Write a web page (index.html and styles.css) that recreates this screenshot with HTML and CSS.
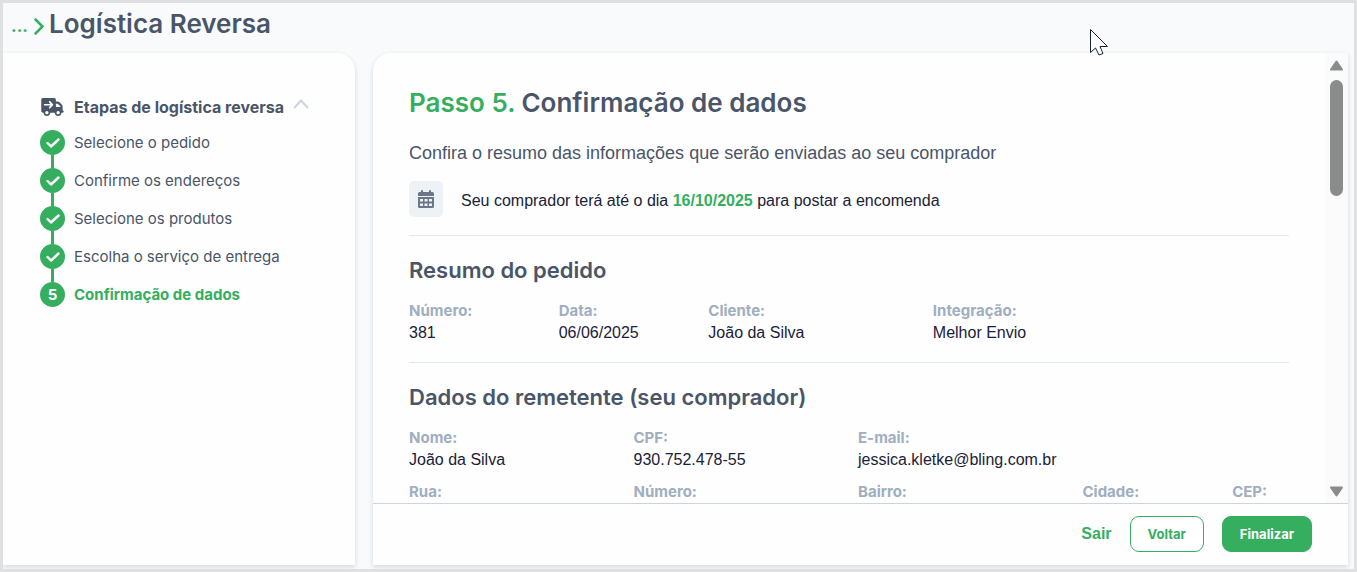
FILE: index.html
```html
<!DOCTYPE html>
<html lang="pt-BR">
<head>
    <meta charset="UTF-8">
    <meta name="viewport" content="width=device-width, initial-scale=1.0">
    <title>Logística Reversa</title>
    <link rel="stylesheet" href="styles.css">
</head>
<body>
    <header class="topbar">
        <a href="#" class="back">...</a>
        <svg class="chevron" viewBox="0 0 10 17"><path d="M1.5 1.5 8.5 8.5 1.5 15.5"/></svg>
        <h1>Logística Reversa</h1>
    </header>

    <div class="layout">
        <aside class="sidebar">
            <button class="steps-toggle" type="button">
                <svg class="truck" viewBox="0 0 640 512"><path d="M0 48C0 21.500 21.500 0 48 0H368c26.500 0 48 21.500 48 48V96h50.700c17 0 33.300 6.700 45.300 18.700L589.300 192c12 12 18.700 28.300 18.700 45.300V256v32 64c17.700 0 32 14.300 32 32s-14.300 32-32 32H576c0 53-43 96-96 96s-96-43-96-96H256c0 53-43 96-96 96s-96-43-96-96H48c-26.500 0-48-21.500-48-48V48zM416 256H544V237.300L466.700 160H416v96zM160 464a48 48 0 1 0 0-96 48 48 0 1 0 0 96zm368-48a48 48 0 1 0-96 0 48 48 0 1 0 96 0zM257 95c-9.400-9.400-24.600-9.400-33.900 0s-9.400 24.600 0 33.900l39 39L96 168c-13.300 0-24 10.700-24 24s10.700 24 24 24l166.100 0-39 39c-9.400 9.400-9.400 24.600 0 33.900s24.600 9.400 33.900 0l80-80c9.400-9.400 9.400-24.600 0-33.900L257 95z"/></svg>
                <span>Etapas de logística reversa</span>
                <svg class="caret" viewBox="0 0 16 10"><path d="M1.500 8.500 8 1.500 14.500 8.500"/></svg>
            </button>
            <ol class="steps">
                <li>
                    <span class="dot"><svg viewBox="0 0 14 10"><path d="M1.500 5 5 8.500 12.500 1.500"/></svg></span>
                    Selecione o pedido
                </li>
                <li>
                    <span class="dot"><svg viewBox="0 0 14 10"><path d="M1.500 5 5 8.500 12.500 1.500"/></svg></span>
                    Confirme os endereços
                </li>
                <li>
                    <span class="dot"><svg viewBox="0 0 14 10"><path d="M1.500 5 5 8.500 12.500 1.500"/></svg></span>
                    Selecione os produtos
                </li>
                <li>
                    <span class="dot"><svg viewBox="0 0 14 10"><path d="M1.500 5 5 8.500 12.500 1.500"/></svg></span>
                    Escolha o serviço de entrega
                </li>
                <li class="active">
                    <span class="dot">5</span>
                    Confirmação de dados
                </li>
            </ol>
        </aside>

        <main class="panel">
            <div class="panel-body">
                <div class="content">
                    <h2><span class="green">Passo 5.</span> Confirmação de dados</h2>
                    <p class="intro">Confira o resumo das informações que serão enviadas ao seu comprador</p>
                    <div class="deadline">
                        <span class="calendar">
                            <svg viewBox="0 0 16 18"><path fill-rule="evenodd" d="M4 0a1 1 0 0 1 1 1v1h6V1a1 1 0 0 1 2 0v1h1.500A1.500 1.500 0 0 1 16 3.500V6H0V3.500A1.500 1.500 0 0 1 1.500 2H3V1a1 1 0 0 1 1-1zM0 7h16v9.500a1.500 1.500 0 0 1-1.500 1.500h-13A1.500 1.500 0 0 1 0 16.500zM2 9v2.500h3V9zm4.500 0v2.500h3V9zM11 9v2.500h3V9zM2 13.500V16h3v-2.500zm4.500 0V16h3v-2.500zm4.500 0V16h3v-2.500z"/></svg>
                        </span>
                        <p>Seu comprador terá até o dia <strong class="green">16/10/2025</strong> para postar a encomenda</p>
                    </div>

                    <section>
                        <h3>Resumo do pedido</h3>
                        <dl class="grid">
                            <div class="col-2"><dt>Número:</dt><dd>381</dd></div>
                            <div class="col-2"><dt>Data:</dt><dd>06/06/2025</dd></div>
                            <div class="col-3"><dt>Cliente:</dt><dd>João da Silva</dd></div>
                            <div class="col-5"><dt>Integração:</dt><dd>Melhor Envio</dd></div>
                        </dl>
                    </section>

                    <section>
                        <h3>Dados do remetente (seu comprador)</h3>
                        <dl class="grid">
                            <div class="col-3"><dt>Nome:</dt><dd>João da Silva</dd></div>
                            <div class="col-3"><dt>CPF:</dt><dd>930.752.478-55</dd></div>
                            <div class="col-6"><dt>E-mail:</dt><dd>jessica.kletke@bling.com.br</dd></div>
                            <div class="col-3"><dt>Rua:</dt></div>
                            <div class="col-3"><dt>Número:</dt></div>
                            <div class="col-3"><dt>Bairro:</dt></div>
                            <div class="col-2"><dt>Cidade:</dt></div>
                            <div class="col-1"><dt>CEP:</dt></div>
                        </dl>
                    </section>
                </div>
                <div class="scrollbar">
                    <svg viewBox="0 0 15 11"><path d="M7.500 1.500 13 9.500H2z"/></svg>
                    <div class="track"><div class="thumb"></div></div>
                    <svg viewBox="0 0 15 11"><path d="M7.500 9.500 13 1.500H2z"/></svg>
                </div>
            </div>
            <footer class="actions">
                <a href="#" class="exit">Sair</a>
                <button type="button" class="btn">Voltar</button>
                <button type="button" class="btn btn-primary">Finalizar</button>
            </footer>
        </main>
    </div>

    <svg class="cursor" viewBox="0 0 18 27"><path d="M.5.500v23l5-4.500 3.500 7 4-1.500-3-7h7.500z"/></svg>
</body>
</html>
```

FILE: styles.css
```css
* {
    box-sizing: border-box;
}
body {
    display: flex;
    flex-direction: column;
    height: 100vh;
    margin: 0;
    border: 3px solid #dfe0e2;
    background: #f8fafc;
    color: #1a2238;
    font-family: "Liberation Sans", Arial, sans-serif;
    font-size: 16px;
    overflow: hidden;
}
h1, h2, h3, p, dl, dd, ol {
    margin: 0;
    padding: 0;
}
h1, h2, h3, dt, .back, .sidebar, .btn {
    font-family: Inter, sans-serif;
}
h1, h2, h3 {
    color: #4a5568;
    font-weight: 600;
}
.green {
    color: #35ae60;
}

.topbar {
    display: flex;
    align-items: center;
    height: 50px;
    padding: 0 8px 8px;
}
.topbar h1 {
    margin-left: 5px;
    font-size: 26px;
    line-height: 32px;
}
.back {
    margin-top: 4px;
    color: #35ae60;
    font-size: 17px;
    font-weight: 700;
    text-decoration: none;
}
.chevron {
    width: 10px;
    height: 17px;
    margin: 4px 0 0 6px;
    fill: none;
    stroke: #35ae60;
    stroke-width: 2.5;
    stroke-linecap: round;
}

.layout {
    display: flex;
    flex: 1;
    gap: 18px;
    min-height: 0;
    padding: 0 6px 4px 0;
}
.sidebar,
.panel {
    background: #fefefe;
    box-shadow: 0 2px 5px rgba(74, 85, 104, 0.2);
}
.sidebar {
    flex: 0 0 352px;
    padding: 42px 36px;
    border-radius: 0 18px 0 0;
    color: #4a5568;
}
.steps-toggle {
    display: flex;
    align-items: center;
    width: 100%;
    height: 24px;
    padding: 0 0 0 2px;
    border: none;
    background: none;
    color: #4a5568;
    font-family: inherit;
    font-size: 16px;
    font-weight: 700;
    cursor: pointer;
}
.truck {
    width: 23px;
    height: 18px;
    margin-right: 10px;
    fill: #4a5568;
}
.caret {
    width: 16px;
    height: 10px;
    margin: 0 0 6px 9px;
    fill: none;
    stroke: #cbd5e0;
    stroke-width: 2;
    stroke-linecap: round;
}
.steps {
    margin-top: 11px;
    padding-left: 1px;
    list-style: none;
    font-size: 15px;
}
.steps li {
    display: flex;
    position: relative;
    align-items: center;
    gap: 9px;
    height: 25px;
    margin-bottom: 13px;
}
/* line joining each step to the next one */
.steps li:not(:last-child)::after {
    content: "";
    position: absolute;
    top: 25px;
    left: 11px;
    width: 3px;
    height: 13px;
    background: #35ae60;
}
.steps .active {
    color: #35ae60;
    font-weight: 700;
}
.dot {
    display: flex;
    align-items: center;
    justify-content: center;
    width: 25px;
    height: 25px;
    border-radius: 50%;
    background: #35ae60;
    color: #fff;
    font-weight: 700;
}
.dot svg {
    width: 14px;
    height: 10px;
    fill: none;
    stroke: #fff;
    stroke-width: 2.4;
    stroke-linecap: round;
    stroke-linejoin: round;
}

.panel {
    display: flex;
    flex: 1;
    flex-direction: column;
    min-width: 0;
    border-radius: 18px 0 0 0;
}
.panel-body {
    display: flex;
    flex: 1;
    min-height: 0;
}
.content {
    flex: 1;
    padding: 34px 36px 0;
    overflow-y: auto;
    scrollbar-width: none;
}
.content h2 {
    font-size: 26px;
    line-height: 32px;
}
.intro {
    margin-top: 22px;
    color: #4a5568;
    font-size: 18px;
    line-height: 24px;
}
.deadline {
    display: flex;
    align-items: center;
    gap: 18px;
    margin-top: 16px;
}
.deadline p {
    padding-top: 3px;
}
.calendar {
    display: flex;
    align-items: center;
    justify-content: center;
    width: 34px;
    height: 36px;
    border-radius: 5px;
    background: #edf2f7;
}
.calendar svg {
    width: 16px;
    height: 18px;
    fill: #6b7688;
}
section {
    margin-top: 18px;
    padding-top: 20px;
    border-top: 1px solid #e2e8f0;
}
.content h3 {
    font-size: 22px;
    line-height: 28px;
}
.grid {
    display: grid;
    grid-template-columns: repeat(12, 1fr);
    gap: 10px 18px;
    margin-top: 16px;
}
.col-1 { grid-column: span 1; }
.col-2 { grid-column: span 2; }
.col-3 { grid-column: span 3; }
.col-5 { grid-column: span 5; }
.col-6 { grid-column: span 6; }
dt, dd {
    line-height: 22px;
}
dt {
    color: #a0aec0;
    font-size: 15px;
    font-weight: 700;
}

.scrollbar {
    display: flex;
    flex-direction: column;
    align-items: center;
    width: 23px;
    padding: 7px 0 6px;
    background: #fbfbfb;
}
.scrollbar svg {
    width: 15px;
    height: 11px;
    fill: #8a8c8b;
    stroke: #8a8c8b;
    stroke-width: 2;
    stroke-linejoin: round;
}
.track {
    flex: 1;
    padding: 9px 0;
}
.thumb {
    width: 13px;
    height: 116px;
    border-radius: 7px;
    background: #8a8c8b;
}

.actions {
    display: flex;
    align-items: center;
    justify-content: flex-end;
    gap: 18px;
    height: 62px;
    padding: 0 36px 2px;
    border-top: 1px solid #cbd5e0;
}
.exit {
    color: #35ae60;
    font-weight: 700;
    text-decoration: none;
}
.btn {
    height: 36px;
    padding: 0 17px;
    border: 1px solid #35ae60;
    border-radius: 9px;
    background: #fff;
    color: #35ae60;
    font-size: 13px;
    font-weight: 700;
    cursor: pointer;
}
.btn-primary {
    background: #35ae60;
    color: #fff;
}

.cursor {
    position: absolute;
    top: 29px;
    left: 1090px;
    width: 18px;
    height: 27px;
    fill: #fff;
    stroke: #1a2238;
    stroke-width: 1;
    pointer-events: none;
}
```
